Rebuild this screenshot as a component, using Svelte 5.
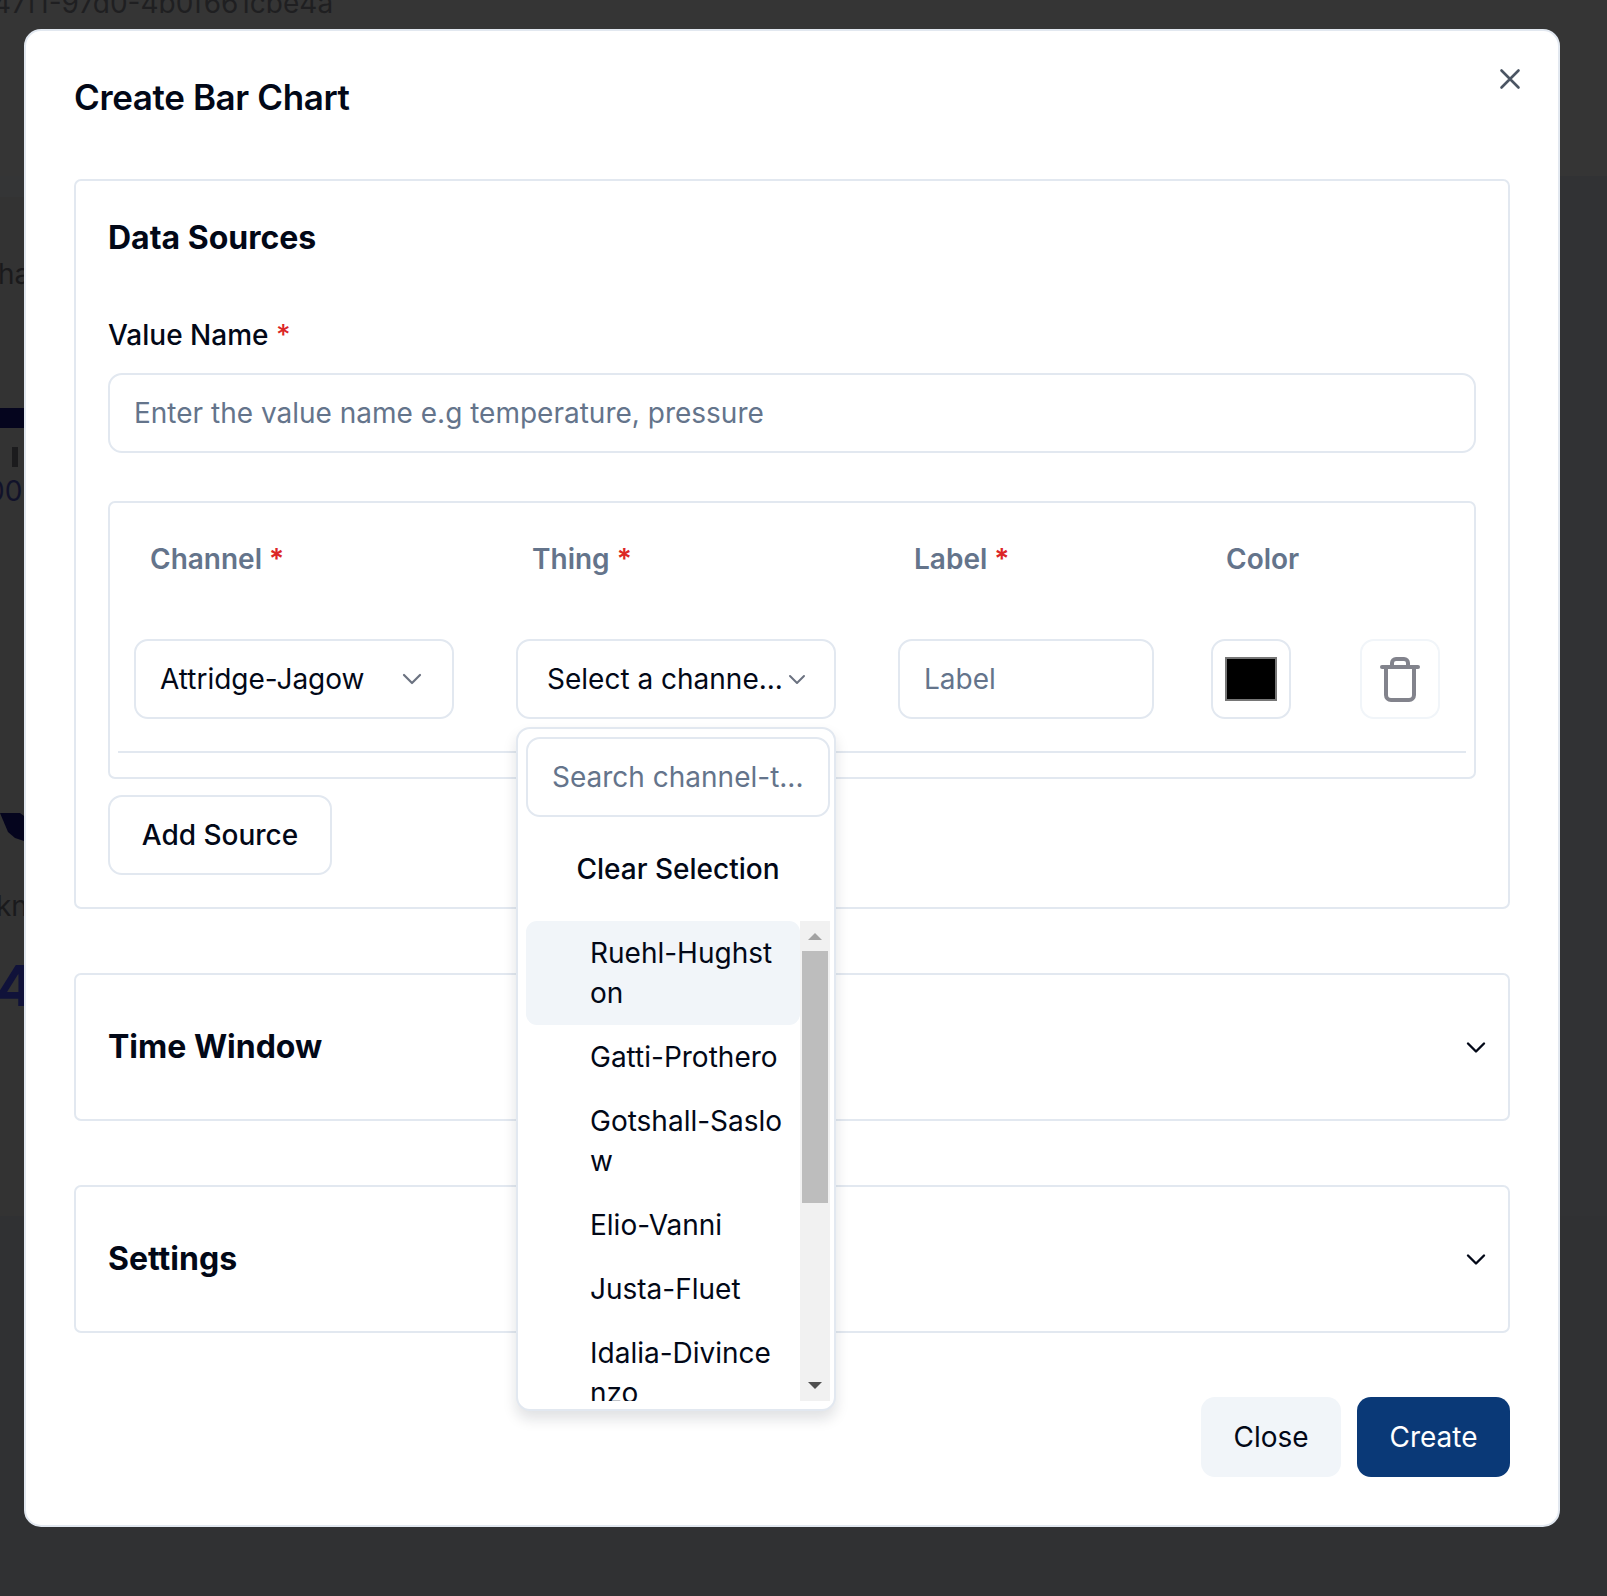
<script>
  const items = [
    "Ruehl-Hughston",
    "Gatti-Prothero",
    "Gotshall-Saslow",
    "Elio-Vanni",
    "Justa-Fluet",
    "Idalia-Divincenzo"
  ];
</script>

<div class="page">
  <div class="behind">
    <span class="scrap uuid">47f1-97d0-4b0f661cbe4a</span>
    <span class="scrap ha">ha</span>
    <span class="scrap bar"></span>
    <span class="scrap tick"></span>
    <span class="scrap zeros">00</span>
    <svg class="scrap donut" width="24" height="28" viewBox="0 0 24 28"><path d="M0 0h20l4 3v25l-9-3L8 19z" fill="#05051e" /></svg>
    <span class="scrap kn">kn</span>
    <span class="scrap four">4</span>
    <span class="scrap right-strip"></span>
  </div>

  <div class="modal">
    <button class="close-x" aria-label="Close">
      <svg width="24" height="24" viewBox="0 0 24 24" fill="none" stroke="#4b5563" stroke-width="2.6" stroke-linecap="round">
        <path d="M3.500 3.500l17 17M20.500 3.500l-17 17" />
      </svg>
    </button>

    <h2>Create Bar Chart</h2>

    <section class="card sources">
      <h3>Data Sources</h3>
      <label class="field-label" for="value-name">Value Name <span class="req">*</span></label>
      <input id="value-name" class="input" placeholder="Enter the value name e.g temperature, pressure" />

      <div class="table">
        <div class="head">
          <div class="col-channel">Channel <span class="req">*</span></div>
          <div class="col-thing">Thing <span class="req">*</span></div>
          <div class="col-label">Label <span class="req">*</span></div>
          <div class="col-color">Color</div>
        </div>
        <div class="row">
          <div class="select col-channel">
            <span class="select-text">Attridge-Jagow</span>
            <svg class="chev" width="22" height="12" viewBox="0 0 22 12" fill="none" stroke="#6b7280" stroke-width="2.2" stroke-linecap="round" stroke-linejoin="round"><path d="M3 2l8 8 8-8" /></svg>
          </div>
          <div class="thing-cell col-thing">
            <div class="select thing">
              <span class="select-text">Select a channe...</span>
              <svg class="chev" width="18" height="11" viewBox="0 0 18 11" fill="none" stroke="#6b7280" stroke-width="2" stroke-linecap="round" stroke-linejoin="round"><path d="M2 2l7 7 7-7" /></svg>
            </div>

            <div class="dropdown">
              <input class="input search" placeholder="Search channel-t..." />
              <div class="clear">Clear Selection</div>
              <div class="list">
                <ul>
                  {#each items as item, i}
                    <li class:active={i === 0}>{item}</li>
                  {/each}
                </ul>
                <div class="scrollbar">
                  <span class="arrow up"></span>
                  <span class="thumb"></span>
                  <span class="arrow down"></span>
                </div>
              </div>
            </div>
          </div>
          <input class="input col-label" placeholder="Label" />
          <div class="color-box col-color"><span class="swatch"></span></div>
          <button class="trash" aria-label="Delete">
            <svg width="40" height="46" viewBox="0 0 40 46" fill="none" stroke="#82838c" stroke-width="4" stroke-linecap="round" stroke-linejoin="round">
              <path d="M2 11h36" />
              <path d="M12 10V7a4 4 0 0 1 4-4h8a4 4 0 0 1 4 4v3" />
              <path d="M6 11v28a5 5 0 0 0 5 5h18a5 5 0 0 0 5-5V11" />
            </svg>
          </button>
        </div>
        <div class="rule"></div>
      </div>

      <button class="add">Add Source</button>
    </section>

    <section class="card collapsed">
      <h3>Time Window</h3>
      <svg width="22" height="13" viewBox="0 0 22 13" fill="none" stroke="#020817" stroke-width="2.4" stroke-linecap="round" stroke-linejoin="round"><path d="M3 2.500l8 8 8-8" /></svg>
    </section>

    <section class="card collapsed settings">
      <h3>Settings</h3>
      <svg width="22" height="13" viewBox="0 0 22 13" fill="none" stroke="#020817" stroke-width="2.4" stroke-linecap="round" stroke-linejoin="round"><path d="M3 2.500l8 8 8-8" /></svg>
    </section>

    <div class="footer">
      <button class="btn secondary">Close</button>
      <button class="btn primary">Create</button>
    </div>
  </div>
</div>

<style>
  :global(body) {
    margin: 0;
    background: #323234;
  }

  .page {
    position: relative;
    height: 1596px;
    overflow: hidden;
    padding: 29px 47px 0 24px;
    box-sizing: border-box;
    font-family: Inter, "Noto Sans", sans-serif;
    font-size: 28px;
    line-height: 40px;
    color: #020817;
  }

  .behind {
    position: absolute;
    inset: 0;
    background: linear-gradient(#353535 0, #353535 176px, #343536 176px, #343536 197px, #333333 197px, #333333 1216px, #303133 1216px);
  }

  .scrap {
    position: absolute;
    left: 0;
    color: #1a1a1c;
  }

  .right-strip {
    top: 176px;
    left: 1555px;
    right: 0;
    height: 1040px;
    background: #313234;
  }

  .uuid {
    top: -17px;
    left: -7px;
    color: #1f1f21;
    font-size: 28px;
    white-space: nowrap;
  }

  .ha {
    top: 254px;
    left: -2px;
  }

  .bar {
    top: 408px;
    width: 24px;
    height: 20px;
    background: #05051e;
  }

  .tick {
    top: 447px;
    left: 12px;
    width: 6px;
    height: 20px;
    background: #1b1b1d;
  }

  .zeros {
    top: 471px;
    left: -13px;
    color: #11122a;
  }

  .donut {
    top: 813px;
  }

  .kn {
    top: 886px;
    left: -4px;
  }

  .four {
    top: 958px;
    left: -4px;
    font-size: 56px;
    line-height: 56px;
    font-weight: 700;
    color: #10123a;
  }

  .modal {
    position: relative;
    box-sizing: border-box;
    width: 1536px;
    height: 1498px;
    padding: 45px 48px 0;
    background: #fff;
    border: 2px solid #e2e8f0;
    border-radius: 17px;
  }

  .close-x {
    position: absolute;
    top: 36px;
    right: 36px;
    display: flex;
    padding: 0;
    background: none;
    border: none;
  }

  h2 {
    margin: 0;
    height: 45px;
    font-size: 35px;
    line-height: 42px;
    font-weight: 600;
    letter-spacing: -0.38px;
  }

  h3 {
    margin: 0;
    font-size: 32px;
    line-height: 44px;
    font-weight: 700;
  }

  .card {
    box-sizing: border-box;
    border: 2px solid #e2e8f0;
    border-radius: 7px;
    background: #fff;
  }

  .sources {
    height: 730px;
    padding: 35px 32px 0;
    margin-top: 58px;
  }

  .collapsed {
    height: 148px;
    margin-top: 64px;
    padding: 0 21px 0 32px;
    display: flex;
    align-items: center;
    justify-content: space-between;
  }

  .field-label {
    display: block;
    margin-top: 55px;
    font-weight: 500;
    height: 58px;
  }

  .req {
    color: #dc2626;
  }

  .input {
    box-sizing: border-box;
    display: block;
    width: 100%;
    height: 80px;
    padding: 0 24px;
    border: 2px solid #e2e8f0;
    border-radius: 14px;
    background: #fff;
    font: inherit;
    color: inherit;
    outline: none;
  }

  .input::placeholder {
    color: #64748b;
    opacity: 1;
  }

  .table {
    box-sizing: border-box;
    height: 278px;
    margin-top: 48px;
    border: 2px solid #e2e8f0;
    border-radius: 7px;
    padding: 0 8px;
  }

  .head {
    display: flex;
    height: 136px;
    padding: 0 16px;
    align-items: center;
    color: #64748b;
    font-weight: 600;
    padding-bottom: 25px;
    box-sizing: border-box;
    gap: 62px;
  }

  .head > div {
    padding-left: 16px;
    box-sizing: border-box;
  }

  .col-channel,
  .col-thing {
    width: 320px;
    flex: none;
  }

  .row .col-label,
  .head .col-label {
    width: 256px;
    flex: none;
  }

  .row .col-color,
  .head .col-color {
    width: 80px;
    flex: none;
    white-space: nowrap;
    margin-left: -5px;
  }

  .head .col-color {
    margin-left: -6px;
  }

  .row {
    display: flex;
    gap: 62px;
    padding: 0 16px;
    height: 80px;
  }

  .select {
    box-sizing: border-box;
    height: 80px;
    display: flex;
    align-items: center;
    justify-content: space-between;
    padding: 0 29px 0 24px;
    border: 2px solid #e2e8f0;
    border-radius: 14px;
    background: #fff;
  }

  .select.thing {
    padding: 0 28px 0 29px;
  }

  .thing-cell {
    position: relative;
  }

  .select-text {
    white-space: nowrap;
  }

  .chev {
    flex: none;
  }

  .color-box {
    box-sizing: border-box;
    height: 80px;
    display: flex;
    align-items: center;
    justify-content: center;
    border: 2px solid #e2e8f0;
    border-radius: 14px;
  }

  .swatch {
    box-sizing: border-box;
    width: 52px;
    height: 44px;
    background: #000;
    border: 2px solid #767676;
  }

  .trash {
    box-sizing: border-box;
    width: 80px;
    height: 80px;
    margin-left: 7px;
    display: flex;
    align-items: center;
    justify-content: center;
    padding: 0;
    background: #fff;
    border: 2px solid #f1f5f9;
    border-radius: 14px;
  }

  .rule {
    height: 2px;
    margin-top: 32px;
    background: #e2e8f0;
  }

  .add {
    box-sizing: border-box;
    display: block;
    width: 224px;
    height: 80px;
    margin-top: 16px;
    padding: 0;
    background: #fff;
    border: 2px solid #e2e8f0;
    border-radius: 14px;
    font: inherit;
    font-weight: 500;
    color: inherit;
  }

  .dropdown {
    position: absolute;
    top: 88px;
    left: 0;
    z-index: 5;
    box-sizing: border-box;
    width: 320px;
    height: 684px;
    padding: 8px 4px 0 8px;
    background: #fff;
    border: 2px solid #e2e8f0;
    border-radius: 14px;
    box-shadow: 0 8px 14px rgba(15, 23, 42, 0.13);
  }

  .search {
    width: 304px;
    padding: 0 24px;
  }

  .clear {
    height: 104px;
    display: flex;
    align-items: center;
    justify-content: center;
    font-weight: 500;
  }

  .list {
    display: flex;
    height: 480px;
    overflow: hidden;
  }

  ul {
    flex: none;
    width: 274px;
    margin: 0;
    padding: 0;
    list-style: none;
  }

  li {
    box-sizing: border-box;
    padding: 12px 14px 12px 64px;
    word-break: break-all;
    border-radius: 11px;
  }

  li.active {
    background: #f1f5f9;
  }

  .scrollbar {
    position: relative;
    flex: none;
    width: 30px;
    height: 480px;
    background: #f1f1f1;
  }

  .thumb {
    position: absolute;
    top: 30px;
    left: 2px;
    width: 26px;
    height: 252px;
    background: #bdbdbd;
  }

  .arrow {
    position: absolute;
    left: 8px;
    width: 0;
    height: 0;
    border-left: 7px solid transparent;
    border-right: 7px solid transparent;
  }

  .arrow.up {
    top: 12px;
    border-bottom: 7px solid #a3a3a3;
  }

  .arrow.down {
    bottom: 12px;
    border-top: 7px solid #505050;
  }

  .footer {
    position: absolute;
    right: 48px;
    bottom: 48px;
    display: flex;
    gap: 16px;
  }

  .btn {
    height: 80px;
    padding: 0;
    border: none;
    border-radius: 14px;
    font: inherit;
  }

  .secondary {
    width: 140px;
    background: #f1f5f9;
    color: #020817;
  }

  .primary {
    width: 153px;
    background: #0a3977;
    color: #fff;
  }
</style>
